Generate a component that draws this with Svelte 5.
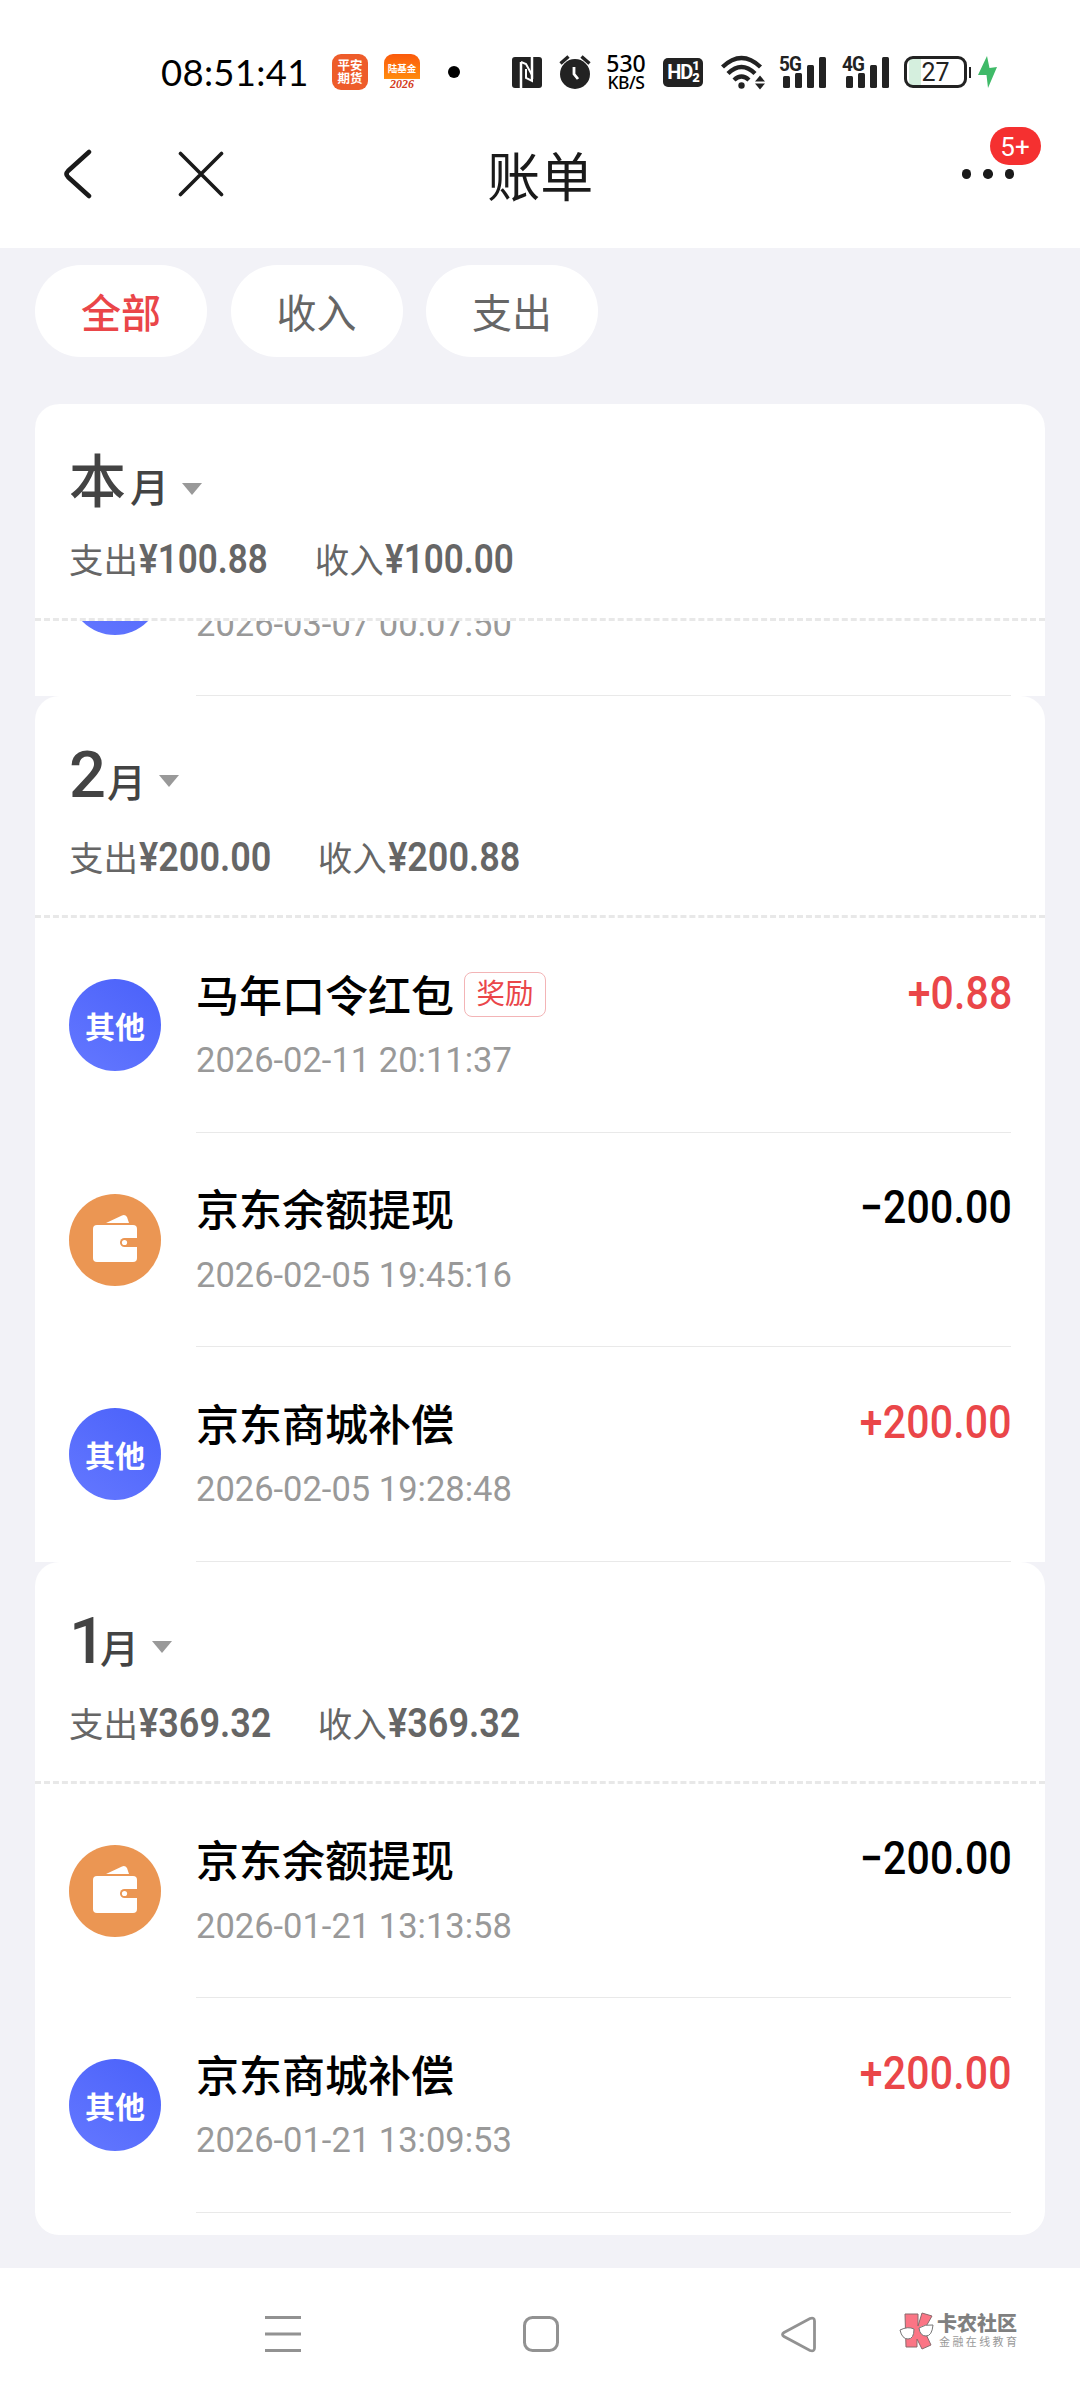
<script lang="ts">
	type Item = { kind: 'other' | 'wallet'; title: string; tag?: string; time: string; amount: string };
	type Month = { label: string; out: string; income: string; items: Item[] };

	let active = $state('全部');
	const filters = ['全部', '收入', '支出'];

	const months: Month[] = [
		{
			label: '本',
			out: '100.88',
			income: '100.00',
			items: [{ kind: 'other', title: '', time: '2026-03-07 00:07:50', amount: '' }]
		},
		{
			label: '2',
			out: '200.00',
			income: '200.88',
			items: [
				{ kind: 'other', title: '马年口令红包', tag: '奖励', time: '2026-02-11 20:11:37', amount: '+0.88' },
				{ kind: 'wallet', title: '京东余额提现', time: '2026-02-05 19:45:16', amount: '−200.00' },
				{ kind: 'other', title: '京东商城补偿', time: '2026-02-05 19:28:48', amount: '+200.00' }
			]
		},
		{
			label: '1',
			out: '369.32',
			income: '369.32',
			items: [
				{ kind: 'wallet', title: '京东余额提现', time: '2026-01-21 13:13:58', amount: '−200.00' },
				{ kind: 'other', title: '京东商城补偿', time: '2026-01-21 13:09:53', amount: '+200.00' }
			]
		}
	];
</script>

{#snippet signal(label: string)}
	<div class="signal">
		<span class="net">{label}</span>
		<svg width="48" height="34" viewBox="0 0 48 34">
			<g fill="#222">
				<rect x="4" y="21" width="7" height="12" rx="1.5" />
				<rect x="16" y="18" width="7" height="15" rx="1.5" />
				<rect x="28" y="10" width="7" height="23" rx="1.5" />
				<rect x="40" y="2" width="7" height="31" rx="1.5" />
			</g>
		</svg>
	</div>
{/snippet}

<div class="screen">
	<div class="status">
		<span class="clock">08:51:41</span>
		<div class="app pingan"><span>平安</span><span>期货</span></div>
		<div class="app fund">
			<span>陆基金</span>
			<i>2026</i>
		</div>
		<span class="dot"></span>
		<svg class="nfc" width="30" height="31" viewBox="0 0 30 31">
			<rect width="30" height="31" rx="3" fill="#222" />
			<path d="M9 31V5" fill="none" stroke="#fff" stroke-width="2.500" />
			<path d="M9 5l5 2 6 11v6l-6-3V12" fill="none" stroke="#fff" stroke-width="2" />
			<path d="M20 22V0" fill="none" stroke="#fff" stroke-width="2.500" />
		</svg>
		<svg class="alarm" width="32" height="34" viewBox="0 0 32 34">
			<circle cx="16" cy="19" r="15" fill="#222" />
			<path d="M1.500 8.500L9.500 1.500M30.500 8.500L22.500 1.500" stroke="#222" stroke-width="3.400" />
			<path d="M15 12v7l4 5" fill="none" stroke="#fff" stroke-width="2.800" />
		</svg>
		<div class="speed"><span>530</span><small>KB/S</small></div>
		<div class="hd">HD<span><b>1</b><b>2</b></span></div>
		<svg class="wifi" width="45" height="35" viewBox="0 0 45 35">
			<g fill="none" stroke="#222" stroke-width="4.400">
				<path d="M1.500 12Q20.500 -6 39.500 12" />
				<path d="M7 18.500Q20.500 5.500 34 18.500" />
				<path d="M13 25Q20.500 18 28 25" />
			</g>
			<circle cx="20.500" cy="30.500" r="3.200" fill="#222" />
			<path d="M34 26.500l5-6 5 6zM34 28.500l5 6 5-6z" fill="#222" />
		</svg>
		{@render signal('5G')}
		{@render signal('4G')}
		<div class="battery"><span>27</span></div>
		<svg class="bolt" width="20" height="32" viewBox="0 0 20 32">
			<path d="M9 0L0 19h8.500L10 32l9-21-7.500 1z" fill="#3fba68" />
		</svg>
	</div>

	<header>
		<svg class="back" width="30" height="50" viewBox="0 0 30 50">
			<path d="M27 3L6 22Q3 25 6 28L27 47" fill="none" stroke="#1a1a1a" stroke-width="4.500" stroke-linecap="round" />
		</svg>
		<svg class="close" width="46" height="46" viewBox="0 0 46 46">
			<path d="M2.500 2.500L43.500 43.500M43.500 2.500L2.500 43.500" stroke="#1a1a1a" stroke-width="3.600" stroke-linecap="round" />
		</svg>
		<h1>账单</h1>
		<div class="more">
			<i></i><i></i><i></i>
			<span class="badge">5+</span>
		</div>
	</header>

	<main>
		<div class="filters">
			{#each filters as filter}
				<button class:active={active === filter} onclick={() => (active = filter)}>{filter}</button>
			{/each}
		</div>

		<div class="list">
			{#each months as month, i}
				<section class:current={i === 0}>
					<div class="month">
						<h2>
							<span class="num" class:han={i === 0} class:one={month.label === '1'}>{month.label}</span>
							<span class="unit">月</span>
							<span class="caret"></span>
						</h2>
						<p>
							<span>支出<b>¥{month.out}</b></span>
							<span>收入<b>¥{month.income}</b></span>
						</p>
					</div>
					<div class="items">
						{#each month.items as item}
							<div class="item">
								<div class="icon {item.kind}">
									{#if item.kind === 'other'}
										{#if item.title}其他{/if}
									{:else}
										<svg width="46" height="50" viewBox="0 0 46 50">
											<path d="M14 8L30 .5Q33 -1 35 2L37 8z" fill="#fff" />
											<rect x="1" y="10" width="44" height="37" rx="4" fill="#fff" />
											<path d="M46 23H32.500a4.500 4.500 0 0 0 0 9H46z" fill="#eb9653" />
											<circle cx="32.500" cy="27.500" r="2.600" fill="#fff" />
										</svg>
									{/if}
								</div>
								<div class="info">
									<div class="line">
										<span class="title">{item.title}</span>
										{#if item.tag}<span class="tag">{item.tag}</span>{/if}
										<span class="amount" class:plus={item.amount.startsWith('+')}>{item.amount}</span>
									</div>
									<div class="time">{item.time}</div>
								</div>
							</div>
						{/each}
					</div>
				</section>
			{/each}
		</div>
	</main>

	<nav>
		<svg width="36" height="38" viewBox="0 0 36 38">
			<path d="M0 2.500H36M0 19H36M0 35.500H36" stroke="#929292" stroke-width="3" />
		</svg>
		<svg class="home" width="36" height="36" viewBox="0 0 36 36">
			<rect x="1.500" y="1.500" width="33" height="33" rx="8" fill="none" stroke="#929292" stroke-width="3" />
		</svg>
		<svg class="prev" width="36" height="37" viewBox="0 0 36 37">
			<path d="M3 16.500L29 2.500Q33.500 1 33.500 5V32Q33.500 36 29 34.500L3 20.500Q0 18.500 3 16.500z" fill="none" stroke="#929292" stroke-width="2.800" />
		</svg>
		<div class="brand">
			<svg width="36" height="38" viewBox="0 0 36 38">
				<g fill="#fb7585" stroke="#8a6a6d" stroke-width="1">
					<path d="M6 2H19V14L23 1L33 4L25 18L32 33L23 37L18 27V35H7z" />
				</g>
				<g fill="#fff" stroke="#777" stroke-width="1">
					<path d="M1 18Q9 14 15 17Q15 27 9 27Q3 27 1 18z" />
					<path d="M20 16Q26 12 34 13Q33 24 27 24Q21 24 20 16z" />
				</g>
			</svg>
			<div class="words"><strong>卡农社区</strong><small>金融在线教育</small></div>
		</div>
	</nav>
</div>

<style>
	:global(body) {
		background: #fff;
	}

	.screen {
		width: 1080px;
		height: 2400px;
		display: flex;
		flex-direction: column;
		overflow: hidden;
		font-family: Roboto, 'Noto Sans CJK SC', sans-serif;
		color: #000;
	}

	svg {
		display: block;
		flex: none;
	}

	/* status bar */
	.status {
		height: 100px;
		padding: 44px 0 0 161px;
		box-sizing: border-box;
		display: flex;
		align-items: center;
		flex: none;
	}

	.clock {
		width: 171px;
		font: 36.5px Lato, sans-serif;
		letter-spacing: 0.3px;
		white-space: nowrap;
	}

	.app {
		width: 36px;
		height: 36px;
		box-sizing: border-box;
		border-radius: 9px;
		background: #ee5c2a;
		color: #fff;
		display: flex;
		flex-direction: column;
		align-items: center;
		font-weight: 700;
	}

	.pingan {
		padding-top: 6px;
		font-size: 12.5px;
		line-height: 12.5px;
	}

	.fund {
		margin-left: 16px;
		padding-top: 9px;
		font-size: 9.5px;
		line-height: 12px;
		background: linear-gradient(#fb5a0c, #ff8a0c 68%, #fff 70%);
	}

	.fund i {
		font: italic 700 12px/13px 'Liberation Serif', serif;
		color: #d33a20;
		margin-top: 3px;
	}

	.dot {
		width: 12px;
		height: 12px;
		border-radius: 50%;
		background: #000;
		margin: 0 52px 0 28px;
	}

	.alarm {
		margin-left: 17px;
	}

	.speed {
		width: 46px;
		margin-left: 12px;
		margin-right: 1px;
		display: flex;
		flex-direction: column;
		align-items: center;
		font: 500 23px/21px 'Noto Sans', sans-serif;
	}

	.speed small {
		font-size: 17.5px;
		line-height: 17px;
		letter-spacing: -0.5px;
	}

	.hd {
		width: 40px;
		height: 29px;
		margin-left: 13px;
		border-radius: 5px;
		background: #222;
		color: #fff;
		display: flex;
		align-items: center;
		justify-content: center;
		font-size: 20px;
		font-weight: 700;
		letter-spacing: -1px;
	}

	.hd span {
		display: flex;
		flex-direction: column;
		font-size: 13px;
		line-height: 12px;
	}

	.wifi {
		margin-left: 18px;
	}

	.signal {
		position: relative;
		margin-left: 13px;
	}

	.signal + .signal {
		margin-left: 15px;
	}

	.net {
		position: absolute;
		left: 0;
		top: -1px;
		font-size: 21px;
		line-height: 20px;
		font-weight: 700;
		color: #222;
		letter-spacing: -1px;
		transform: scaleX(0.9);
		transform-origin: left;
	}

	.battery {
		width: 63px;
		height: 32px;
		box-sizing: border-box;
		margin-left: 14px;
		border: 3px solid #222;
		border-radius: 9px;
		background: linear-gradient(90deg, #d5efde 12px, #fff 12px) 2px 0 no-repeat;
		position: relative;
		text-align: center;
		font: 25px/27px Roboto, sans-serif;
		color: #222;
	}

	.battery::after {
		content: '';
		position: absolute;
		right: -7px;
		top: 8px;
		width: 2px;
		height: 11px;
		background: #222;
	}

	.bolt {
		margin-left: 11px;
	}

	/* title bar */
	header {
		height: 148px;
		padding: 0 60px 0 62px;
		display: flex;
		align-items: center;
		flex: none;
	}

	.close {
		margin-left: 86px;
	}

	h1 {
		flex: 1;
		margin: 0 165px 0 60px;
		padding-top: 9px;
		text-align: center;
		font-size: 53px;
		line-height: 80px;
		font-weight: 400;
		color: #1a1a1a;
	}

	.more {
		display: flex;
		gap: 12px;
		position: relative;
		margin-right: 6px;
	}

	.more i {
		width: 9.5px;
		height: 9.5px;
		border-radius: 50%;
		background: #1a1a1a;
	}

	.badge {
		position: absolute;
		left: 28px;
		top: -42px;
		width: 51px;
		height: 38px;
		border-radius: 19px;
		background: #f53030;
		color: #fff;
		font-size: 26px;
		line-height: 40px;
		text-align: center;
	}

	main {
		height: 2020px;
		box-sizing: border-box;
		padding: 17px 35px 33px;
		background: #f2f2f7;
		flex: none;
	}

	.filters {
		display: flex;
		gap: 23.5px;
		margin-bottom: 47px;
	}

	.filters button {
		width: 172px;
		height: 92px;
		padding: 0;
		border: none;
		border-radius: 46px;
		background: #fff;
		font: 40px 'Noto Sans CJK SC', sans-serif;
		color: #666;
		cursor: pointer;
	}

	.filters button.active {
		color: #ea4649;
		font-weight: 500;
	}

	.list {
		height: 1831px;
		overflow: hidden;
		border-radius: 24px;
		background: #fff;
	}

	/* the page colour shows behind the round corners of each month header */
	section {
		background: linear-gradient(#f2f2f7 24px, #fff 24px);
	}

	.month {
		height: 222px;
		box-sizing: border-box;
		padding: 43px 34px 0;
		border-radius: 24px 24px 0 0;
		background: #fff;
		border-bottom: 3px dashed #e8e8e8;
	}

	.current .month {
		height: 217px;
	}

	h2 {
		height: 68px;
		margin: 0;
		display: flex;
		align-items: baseline;
		font-weight: 500;
		line-height: 72px;
		color: #434343;
	}

	.num {
		font-size: 65px;
		letter-spacing: -3px;
	}

	.num.one {
		margin-right: -7px;
	}

	.num.han {
		font-size: 57px;
		letter-spacing: 0;
	}

	.unit {
		margin-left: 4px;
		font-size: 39px;
	}

	.caret {
		margin: 36px 0 0 13px;
		border: 10.5px solid transparent;
		border-top: 12px solid #999;
		border-bottom: none;
		align-self: flex-start;
	}

	p {
		display: flex;
		gap: 46px;
		margin: 20px 0 0;
		font-size: 34.5px;
		line-height: 60px;
		color: #666;
	}

	.current p {
		margin-top: 14px;
	}

	/* squeezed a little to get the narrow figures */
	p b {
		display: inline-block;
		margin: 0 -16px 0 1px;
		font-size: 40.5px;
		font-weight: 600;
		transform: scaleX(0.89);
		transform-origin: left;
	}

	.current p b {
		margin-right: -19px;
		transform: scaleX(0.865);
	}

	.current .items {
		height: 75px;
		overflow: hidden;
		display: flex;
		flex-direction: column;
		justify-content: flex-end;
	}

	.item {
		height: 214.5px;
		flex: none;
		padding: 0 34px;
		box-sizing: border-box;
		display: flex;
		align-items: center;
	}

	.icon {
		width: 92px;
		height: 92px;
		border-radius: 50%;
		display: flex;
		align-items: center;
		justify-content: center;
		font-size: 30px;
		font-weight: 700;
		color: #fff;
	}

	.other {
		background: linear-gradient(215deg, #4a61fa, #6478ff);
	}

	.wallet {
		background: #eb9653;
	}

	.info {
		flex: 1;
		height: 100%;
		margin-left: 35px;
		box-sizing: border-box;
		padding-top: 46px;
		border-bottom: 1px solid #e9e9e9;
	}

	.line {
		height: 60px;
		display: flex;
		align-items: center;
	}

	.title {
		margin-top: -3px;
		font-size: 43px;
		font-weight: 500;
	}

	.tag {
		margin-left: 10px;
		width: 82px;
		height: 45px;
		box-sizing: border-box;
		border: 1.5px solid #f3b4b6;
		border-radius: 8px;
		font-size: 28.5px;
		line-height: 43px;
		text-align: center;
		color: #ea4649;
	}

	.amount {
		margin: -2px -1px 0 auto;
		font-size: 45.5px;
		font-weight: 500;
		letter-spacing: 0.2px;
		transform: scaleX(0.9);
		transform-origin: right;
	}

	.amount.plus {
		color: #ea4649;
	}

	.time {
		margin-top: 16px;
		font-size: 34.5px;
		line-height: 40px;
		color: #999;
	}

	/* system navigation */
	nav {
		flex: 1;
		padding: 0 0 0 265px;
		display: flex;
		align-items: center;
	}

	.home {
		margin-left: 222px;
	}

	.prev {
		margin-left: 222px;
	}

	.brand {
		display: flex;
		align-items: center;
		gap: 2px;
		margin: -6px 0 0 82px;
		color: #808080;
	}

	.words {
		display: flex;
		flex-direction: column;
	}

	.words strong {
		font-size: 20px;
		line-height: 20px;
		font-weight: 900;
	}

	.words small {
		margin: 2px 0 0 2px;
		font-size: 11px;
		line-height: 13px;
		letter-spacing: 2.4px;
		color: #999;
	}
</style>
